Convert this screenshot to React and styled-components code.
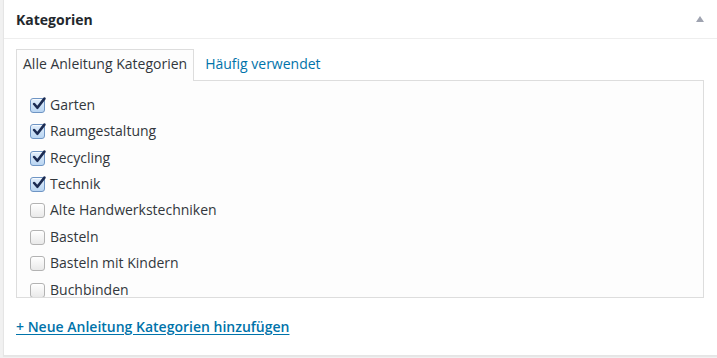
import React from 'react'
import styled, { createGlobalStyle } from 'styled-components'

const Global = createGlobalStyle`
  html, body {
    margin: 0;
    padding: 0;
    background: #f1f1f1;
    overflow: hidden;
  }
`

const Page = styled.div`
  height: 358px;
  padding-left: 3px;
  font-family: 'Open Sans', 'Liberation Sans', sans-serif;
  color: #444;
  font-size: 14px;
`

const Postbox = styled.div`
  width: 716px;
  height: 357px;
  box-sizing: border-box;
  margin-top: -1px;
  background: #fff;
  border: 1px solid #e5e5e5;
  box-shadow: 0 1px 1px rgba(0, 0, 0, 0.04);
  display: flex;
  flex-direction: column;
`

const Header = styled.div`
  height: 39px;
  box-sizing: border-box;
  border-bottom: 1px solid #eee;
  display: flex;
  align-items: center;
  justify-content: space-between;
  padding: 0 14px 0 12px;

  h2 {
    margin: 0;
    font-size: 14px;
    font-weight: 700;
    color: #23282d;
    padding-top: 1px;
  }
`

const Toggle = styled.span`
  width: 0;
  height: 0;
  border-left: 4px solid transparent;
  border-right: 4px solid transparent;
  border-bottom: 6px solid #9fa3b0;
  margin-bottom: 1px;
`

const Inside = styled.div`
  padding: 10px 12px 0 12px;
`

const Tabs = styled.ul`
  display: flex;
  gap: 4px;
  list-style: none;
  margin: 0;
  padding: 0;
  height: 31px;
`

const Tab = styled.li`
  box-sizing: border-box;
  padding: 0 6px;
  height: ${p => (p.$active ? '32px' : '31px')};
  line-height: 28px;
  border: 1px solid ${p => (p.$active ? '#ddd' : 'transparent')};
  border-bottom: none;
  background: ${p => (p.$active ? '#fdfdfd' : 'transparent')};
  color: ${p => (p.$active ? '#32373c' : '#0073aa')};
  position: relative;
  z-index: 1;
`

const Panel = styled.div`
  box-sizing: border-box;
  width: 688px;
  height: 218px;
  border: 1px solid #ddd;
  background: #fdfdfd;
  overflow: hidden;
  padding: 10px 0 0 13px;
`

const List = styled.ul`
  list-style: none;
  margin: 0;
  padding: 0;
`

const Item = styled.li`
  height: 26.43px;
  display: flex;
  align-items: center;
  gap: 5px;
  color: #32373c;
`

const Box = styled.span`
  width: 15px;
  height: 15px;
  box-sizing: border-box;
  border-radius: 3px;
  display: inline-flex;
  align-items: center;
  justify-content: center;
  border: 1px solid ${p => (p.$checked ? '#6f95c4' : '#b3b3b3')};
  background: ${p =>
    p.$checked
      ? 'linear-gradient(#e2eefb, #b9d5f2)'
      : 'linear-gradient(#ffffff, #e9e9e9)'};
  box-shadow: inset 0 1px 0 rgba(255, 255, 255, 0.7);
  position: relative;
  top: 1px;
`

const Footer = styled.div`
  padding: 19px 0 0 0;

  a {
    font-weight: 600;
    color: #0073aa;
    text-decoration: underline;
    text-underline-offset: 2px;
  }
`

const items = [
  ['Garten', true],
  ['Raumgestaltung', true],
  ['Recycling', true],
  ['Technik', true],
  ['Alte Handwerkstechniken', false],
  ['Basteln', false],
  ['Basteln mit Kindern', false],
  ['Buchbinden', false],
]

function Check() {
  return (
    <svg width="14" height="14" viewBox="0 0 13 13" style={{ position: 'absolute', left: 1, top: -2 }}>
      <path d="M2 6.5 L5 10 L11.5 1.5" fill="none" stroke="#1b2b52" strokeWidth="2.4" strokeLinecap="round" strokeLinejoin="round" />
    </svg>
  )
}

export default function App() {
  return (
    <>
      <Global />
      <Page>
        <Postbox>
          <Header>
            <h2>Kategorien</h2>
            <Toggle />
          </Header>
          <Inside>
            <Tabs>
              <Tab $active>Alle Anleitung Kategorien</Tab>
              <Tab>Häufig verwendet</Tab>
            </Tabs>
            <Panel>
              <List>
                {items.map(([name, checked]) => (
                  <Item key={name}>
                    <Box $checked={checked}>{checked && <Check />}</Box>
                    {name}
                  </Item>
                ))}
              </List>
            </Panel>
            <Footer>
              <a href="#">+ Neue Anleitung Kategorien hinzufügen</a>
            </Footer>
          </Inside>
        </Postbox>
      </Page>
    </>
  )
}
